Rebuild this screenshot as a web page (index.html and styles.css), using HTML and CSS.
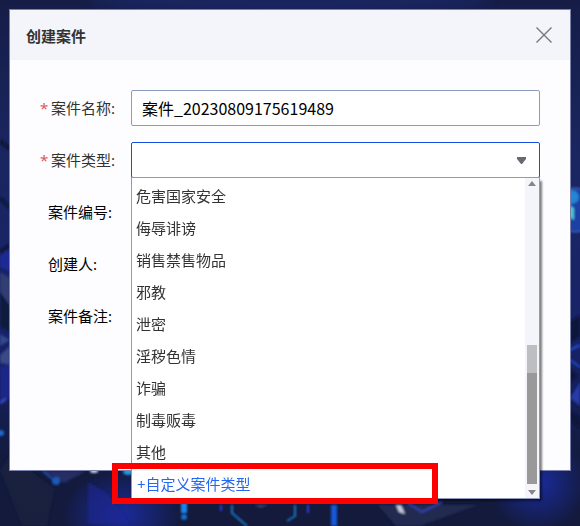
FILE: index.html
```html
<!DOCTYPE html>
<html lang="zh-CN">
<head>
    <meta charset="UTF-8">
    <meta name="viewport" content="width=device-width, initial-scale=1.0">
    <title>创建案件</title>
    <link rel="stylesheet" href="styles.css">
</head>
<body>
    <svg class="backdrop" viewBox="0 0 580 526" preserveAspectRatio="xMidYMid slice" aria-hidden="true">
        <defs>
            <linearGradient id="sky" x1="0" y1="0" x2="0" y2="1">
                <stop offset="0" stop-color="#151d47"/>
                <stop offset="0.3" stop-color="#1a2660"/>
                <stop offset="0.65" stop-color="#18236a"/>
                <stop offset="0.87" stop-color="#121b3e"/>
                <stop offset="1" stop-color="#141a3c"/>
            </linearGradient>
            <radialGradient id="glow">
                <stop offset="0" stop-color="#1a2b9c"/>
                <stop offset="1" stop-color="#1a2b9c" stop-opacity="0"/>
            </radialGradient>
            <filter id="soft"><feGaussianBlur stdDeviation="1"/></filter>
            <filter id="wide"><feGaussianBlur stdDeviation="6"/></filter>
        </defs>
        <rect width="580" height="526" fill="url(#sky)"/>
        <ellipse cx="290" cy="0" rx="200" ry="14" fill="#1c2c6e" opacity="0.6" filter="url(#wide)"/>
        <ellipse cx="122" cy="515" rx="60" ry="45" fill="url(#glow)"/>
        <ellipse cx="538" cy="482" rx="50" ry="50" fill="url(#glow)"/>
        <g filter="url(#soft)">
            <!-- left edge -->
            <path d="M0 141l10 8M0 198l10 10M0 252l10-7" stroke="#0b1230" stroke-width="3"/>
            <path d="M0 256l10-7v22l-10-4z" fill="#1c2a96"/>
            <path d="M0 272l10 6v28l-10-14z" fill="#303c72"/>
            <path d="M0 292l10 14v26l-10-6z" fill="#111a3d"/>
            <path d="M0 334l10 6-10 6z" fill="#35468c"/>
            <path d="M0 355l10-9v19l-10-2z" fill="#3b4a86"/>
            <path d="M0 366h10v32l-10 5z" fill="#1c2787"/>
            <path d="M0 403l6-4" stroke="#3446c0" stroke-width="3"/>
            <circle cx="1" cy="433" r="3" fill="#1c6cd0"/>
            <!-- right edge -->
            <circle cx="575" cy="210" r="22" fill="#1b3fa3" stroke="#4472d4" stroke-width="1"/>
            <ellipse cx="571" cy="197" rx="8" ry="7" fill="#2386d4"/>
            <path d="M569 205l5 3v12l-5-3z" fill="#48c4d8"/>
            <path d="M570 322l10-7v22l-10 6z" fill="#10183b"/>
            <path d="M570 350l10-5M570 360l10 7" stroke="#2148d8" stroke-width="2"/>
            <path d="M570 368l8 8-8 8z" fill="#0f1738"/>
            <path d="M580 382l-10 16 10 8z" fill="#283aa8"/>
            <path d="M570 410l10 8v10l-10-8z" fill="#10183b"/>
            <!-- bottom edge -->
            <path d="M10 455l45 34-8 37h-25l-22-56z" fill="#17213f" opacity="0.7"/>
            <path d="M44 471l42 0-22 12z" fill="#262f66"/>
            <path d="M43 471l13 11" stroke="#2450b0" stroke-width="2"/>
            <circle cx="56" cy="481" r="4" fill="#1d5ab8"/>
            <ellipse cx="94" cy="471" rx="4" ry="2" fill="#c8d2ec"/>
            <ellipse cx="128" cy="472" rx="5" ry="3" fill="#1c9be8"/>
            <path d="M88 482l18 10 24 32h-42z" fill="#1a2792" opacity="0.6"/>
            <path d="M184 503v10" stroke="#1b83ea" stroke-width="6"/>
            <circle cx="184" cy="517" r="3" fill="#1670cc"/>
            <path d="M221 505v6M308 505v8" stroke="#2b3ce4" stroke-width="2"/>
            <path d="M232 505v8l15 13M295 505v11l-8 5" fill="none" stroke="#1b74c4" stroke-width="2"/>
            <path d="M334 505v21" stroke="#1559d8" stroke-width="6"/>
            <path d="M378 505h100l-58 21h-24z" fill="#242a50"/>
            <path d="M408 503l14 9 20-10" fill="none" stroke="#3440b0" stroke-width="2"/>
            <path d="M254 505h14l-7 3z" fill="#3a4268"/>
            <path d="M396 505l5 0 4 9-6-2z" fill="#c4cbdc"/>
        </g>
    </svg>

    <form class="dialog" role="dialog" aria-labelledby="dialogTitle">
        <header class="dialog-header">
            <h1 id="dialogTitle">创建案件</h1>
            <button type="button" class="close" aria-label="关闭">
                <svg viewBox="0 0 16 16" width="16" height="16"><path d="M.5.5l15 15M15.5.5l-15 15"/></svg>
            </button>
        </header>

        <div class="dialog-body">
            <div class="row">
                <label class="required" for="caseName">案件名称:</label>
                <input class="field" type="text" id="caseName" value="案件_20230809175619489" required>
            </div>
            <div class="row">
                <label class="required" for="caseType">案件类型:</label>
                <div class="combo">
                    <select class="field" id="caseType" required></select>
                    <svg class="arrow" viewBox="0 0 9 8" width="9" height="8"><path d="M0 0h9v2L5 7H4L0 2z"/></svg>

                    <div class="dropdown">
                        <ul class="options" role="listbox" aria-label="案件类型">
                            <li role="option">危害国家安全</li>
                            <li role="option">侮辱诽谤</li>
                            <li role="option">销售禁售物品</li>
                            <li role="option">邪教</li>
                            <li role="option">泄密</li>
                            <li role="option">淫秽色情</li>
                            <li role="option">诈骗</li>
                            <li role="option">制毒贩毒</li>
                            <li role="option">其他</li>
                            <li class="custom"><button type="button">+自定义案件类型</button></li>
                        </ul>
                        <div class="scrollbar">
                            <svg viewBox="0 0 8 5" width="8" height="5"><path d="M4 0l4 5H0z"/></svg>
                            <div class="thumb"></div>
                            <svg viewBox="0 0 8 5" width="8" height="5"><path d="M0 0h8L4 5z"/></svg>
                        </div>
                    </div>
                </div>
            </div>
            <div class="row">
                <label for="caseNo">案件编号:</label>
                <input class="field" type="text" id="caseNo">
            </div>
            <div class="row">
                <label for="creator">创建人:</label>
                <input class="field" type="text" id="creator">
            </div>
            <div class="row">
                <label for="remark">案件备注:</label>
                <textarea class="field remark" id="remark"></textarea>
            </div>
        </div>
    </form>
</body>
</html>
```
FILE: styles.css
```css
* {
    box-sizing: border-box;
}
body {
    min-height: 100vh;
    margin: 0;
    padding: 9px;
    background: #141c45;
    font-family: "Noto Sans", "Noto Sans CJK SC", sans-serif;
    font-size: 15px;
    color: #333;
}
.backdrop {
    position: fixed;
    inset: 0;
    width: 100%;
    height: 100%;
}
.dialog {
    position: relative;
    background: #fdfdff;
    border: 1px solid #7d82ad;
}
.dialog-header {
    display: flex;
    align-items: center;
    justify-content: space-between;
    height: 50px;
    padding: 0 18px 0 16px;
    background: #f4f5fa;
}
.dialog-header h1 {
    margin: 0;
    font-size: 15px;
    font-weight: bold;
}
.close {
    display: flex;
    padding: 0;
    border: none;
    background: none;
    cursor: pointer;
}
.close path {
    stroke: #777;
    stroke-width: 1.4;
}
.dialog-body {
    display: flex;
    flex-direction: column;
    gap: 16px;
    padding: 30px;
}
.row {
    display: grid;
    grid-template-columns: 91px 1fr;
}
label {
    height: 36px;
    padding-left: 8px;
    line-height: 36px;
    color: #000;
}
label.required {
    padding-left: 0;
    color: #333;
}
.required::before {
    content: "*";
    display: inline-block;
    width: 11px;
    color: #e0585b;
}
.field {
    display: block;
    width: 100%;
    height: 36px;
    margin: 0;
    padding: 0 10px;
    border: 1px solid #8e9abd;
    border-radius: 2px;
    background: #fff;
    font-family: "Noto Sans CJK SC", sans-serif;
    font-size: 16px;
    color: #000;
    outline: none;
}
.remark {
    height: 142px;
    resize: none;
}

/* drop-down */
.combo {
    position: relative;
}
.combo select {
    appearance: none;
    border-color: #1450e0;
}
.arrow {
    position: absolute;
    top: 15px;
    right: 14px;
    fill: #666a73;
    pointer-events: none;
}
.dropdown {
    position: absolute;
    top: 35px;
    left: 0;
    right: 0;
    z-index: 1;
    display: flex;
    border: 1px solid #8e9abd;
    background: #fff;
    box-shadow: 3px 3px 2px -1px rgba(0, 0, 0, 0.5);
}
.options {
    flex: 1;
    margin: 0;
    padding: 2px 0 0;
    list-style: none;
    line-height: 32px;
}
.options li {
    height: 32px;
    padding-left: 4px;
}
.options .custom {
    position: relative;
    height: 30px;
    padding-left: 5px;
}
.custom button {
    padding: 0;
    border: none;
    background: none;
    font: inherit;
    color: #2468f2;
    cursor: pointer;
}
.custom::after {
    content: "";
    position: absolute;
    inset: -5px 87px -6px -20px;
    border: 6px solid #f00;
    pointer-events: none;
}
.scrollbar {
    display: flex;
    flex-direction: column;
    align-items: center;
    width: 14px;
    padding: 3px 0;
    background: #f4f5fa;
}
.scrollbar svg {
    fill: #868686;
}
.thumb {
    width: 10px;
    height: 139px;
    margin: auto 0 6px;
    background: linear-gradient(#bcbec0 28px, #999 28px);
}
```
